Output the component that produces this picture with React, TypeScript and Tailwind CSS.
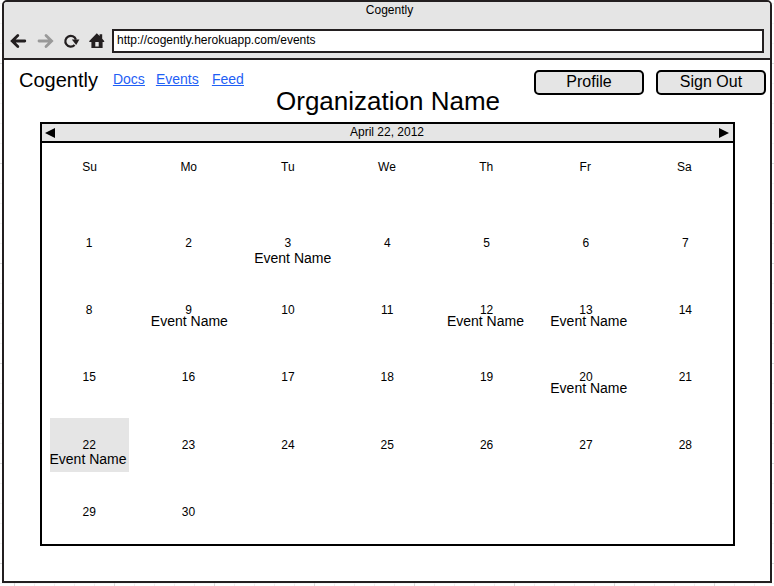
const WEEKDAYS = ["Su", "Mo", "Tu", "We", "Th", "Fr", "Sa"];
const DAYS = Array.from({ length: 30 }, (_, i) => i + 1);

const EVENTS: Record<number, string> = {
  3: "top-[41px] left-[16px]",
  9: "top-[37px] left-[12px]",
  12: "top-[37px] left-[10px]",
  13: "top-[37px] left-[14px]",
  20: "top-[37px] left-[14px]",
  22: "top-[40px] left-[10px]",
};

const GRID_MAJOR = [63, 163, 263, 363, 463, 563];

function CanvasGrid() {
  const rows = Array.from({ length: 30 }, (_, i) => 3 + i * 20);
  const cols = Array.from({ length: 39 }, (_, i) => 14 + i * 20);
  return (
    <svg className="absolute inset-0" width="774" height="586" shapeRendering="crispEdges">
      {rows.map((y) => (
        <rect key={y} x="0" y={y} width="774" height="1" fill={GRID_MAJOR.includes(y) ? "#dcdcdc" : "#f4f4f4"} />
      ))}
      {cols.map((x) => (
        <rect key={x} x={x} y="583" width="1" height="3" fill={(x - 14) % 100 === 0 ? "#dcd6d9" : "#f3edf0"} />
      ))}
    </svg>
  );
}

function NavIcons() {
  return (
    <svg width="106" height="24" viewBox="0 0 106 24" fill="none" className="shrink-0">
      <path d="M20.8 12H8.5M13.8 6.5L8.2 12L13.8 17.5" stroke="#231f20" strokeWidth="2.8" strokeLinecap="round" />
      <path d="M35 12H47.3M42 6.5L47.6 12L42 17.5" stroke="#999" strokeWidth="2.8" strokeLinecap="round" />
      <path d="M70.6 16A5.4 5.4 0 1 1 71.9 10.6" stroke="#231f20" strokeWidth="2.2" />
      <path d="M67.8 10.6H75.4L72.2 15.9Z" fill="#231f20" />
      <path d="M85.3 12L92.8 4.3L95.6 7.1V5.2H98.2V9.8L100.2 12V12.9H98.6V19H87.4V12.9H85.3Z" fill="#231f20" />
      <path d="M91.3 13H94.7V17.6H91.3Z" fill="#e5e5e5" />
    </svg>
  );
}

function Button({ label }: { label: string }) {
  return (
    <button className="h-[25px] w-[110px] rounded-[5px] border-2 border-black bg-[#e5e5e5] pb-[2px] text-[16px] leading-[19px]">
      {label}
    </button>
  );
}

function Calendar() {
  return (
    <section className="mr-[35px] ml-9 h-[424px] border-2 border-black">
      <div className="flex h-[19px] items-center justify-between border-b-2 border-black bg-[#e5e5e5] pr-1 pl-[3px]">
        <svg width="10" height="10" viewBox="0 0 10 10">
          <path d="M0 5L10 0V10Z" />
        </svg>
        <span className="text-[12px] leading-[17px]">April 22, 2012</span>
        <svg width="10" height="10" viewBox="0 0 10 10">
          <path d="M10 5L0 0V10Z" />
        </svg>
      </div>
      <div className="-mx-0.5 grid grid-cols-7 pt-4 pr-[1px] text-center text-[12px] leading-4">
        {WEEKDAYS.map((day) => (
          <span key={day}>{day}</span>
        ))}
      </div>
      <div className="-mr-0.5 -ml-[2.5px] mt-[34px] grid auto-rows-[67.2px] grid-cols-7 text-center text-[12px] leading-4">
        {DAYS.map((day) => (
          <div key={day} className="relative">
            {day === 22 && <div className="mt-[7px] ml-[10.5px] h-[54px] w-[79px] bg-[#e5e5e5]" />}
            <span className="absolute inset-x-0 top-[26px]">{day}</span>
            {EVENTS[day] && (
              <span className={`absolute text-[14px] leading-4 whitespace-nowrap ${EVENTS[day]}`}>Event Name</span>
            )}
          </div>
        ))}
      </div>
    </section>
  );
}

export default function App() {
  return (
    <div className="relative h-[586px] w-[774px] overflow-hidden bg-white pl-0.5 font-['Liberation_Sans',Arial,sans-serif] text-black">
      <CanvasGrid />
      <div className="relative h-[583px] w-[770px] overflow-hidden rounded-t-[5px] border-2 border-[#231f20] bg-white">
        <header className="h-[58px] border-b-2 border-[#231f20] bg-[#e5e5e5]">
          <div className="h-[27px] pl-[5px] text-center text-[12px] leading-4">Cogently</div>
          <div className="flex h-6 pr-1.5">
            <div className="w-[108px]">
              <NavIcons />
            </div>
            <div className="flex-1 border-2 border-[#231f20] bg-white pl-[3px] text-[12px] leading-[19px]">
              http://cogently.herokuapp.com/events
            </div>
          </div>
        </header>
        <main>
          <div className="flex h-[26px] items-start pt-2 pr-1 pl-[15px]">
            <span className="text-[20px] leading-6">Cogently</span>
            <nav className="flex pt-[3px] pl-[15px] text-[14px] leading-4 text-[#1f5ff5] underline">
              <a className="w-[43px]">Docs</a>
              <a className="w-[56px]">Events</a>
              <a>Feed</a>
            </nav>
            <div className="mt-0.5 ml-auto flex gap-3">
              <Button label="Profile" />
              <Button label="Sign Out" />
            </div>
          </div>
          <h1 className="h-9 pl-0.5 text-center text-[26px] leading-[30px]">Organization Name</h1>
          <Calendar />
        </main>
      </div>
    </div>
  );
}
